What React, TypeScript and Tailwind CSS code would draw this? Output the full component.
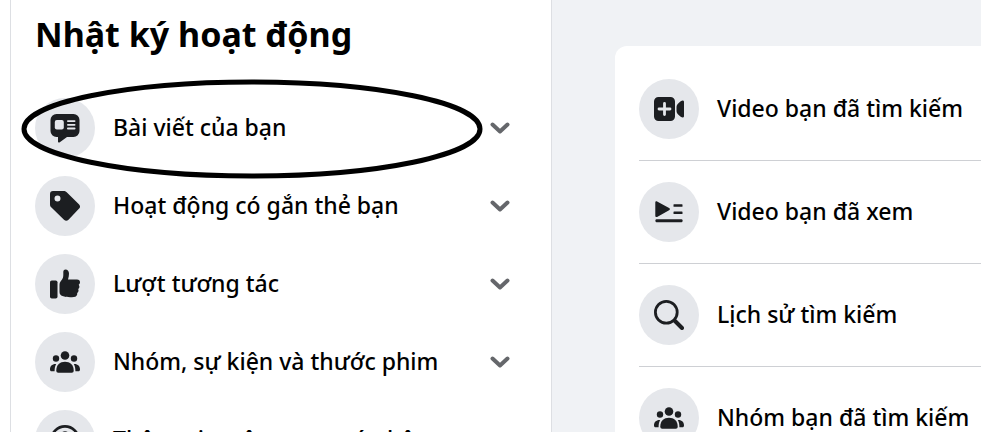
import { ReactNode } from "react";

const menu = [
  { label: "Bài viết của bạn", icon: <PostIcon /> },
  { label: "Hoạt động có gắn thẻ bạn", icon: <TagIcon /> },
  { label: "Lượt tương tác", icon: <LikeIcon /> },
  { label: "Nhóm, sự kiện và thước phim", icon: <GroupIcon /> },
  { label: "Thông tin trên trang cá nhân", icon: <ProfileIcon /> },
];

const history = [
  { label: "Video bạn đã tìm kiếm", icon: <VideoPlusIcon /> },
  { label: "Video bạn đã xem", icon: <WatchIcon /> },
  { label: "Lịch sử tìm kiếm", icon: <SearchIcon /> },
  { label: "Nhóm bạn đã tìm kiếm", icon: <GroupIcon /> },
];

function Svg({ children }: { children: ReactNode }) {
  return (
    <svg viewBox="0 0 30 30" fill="currentColor" className="size-[30px]" aria-hidden="true">
      {children}
    </svg>
  );
}

function PostIcon() {
  return (
    <Svg>
      <path d="M6.500 1h17a6 6 0 0 1 6 6v11a6 6 0 0 1-6 6H17L9.800 29.300c-.9.600-1.800.2-1.800-.9V24H6.500a6 6 0 0 1-6-6V7a6 6 0 0 1 6-6Z" />
      <g fill="#e5e7eb">
        <rect x="4.800" y="7" width="9" height="9.500" rx="2" />
        <rect x="17" y="7.200" width="8.500" height="1.800" rx=".9" />
        <rect x="17" y="10.900" width="8.500" height="1.800" rx=".9" />
        <rect x="17" y="14.600" width="8.500" height="1.800" rx=".9" />
      </g>
    </Svg>
  );
}

function TagIcon() {
  return (
    <Svg>
      <path
        fillRule="evenodd"
        d="M3 0h10.500c1.300 0 2.300.4 3.200 1.300l12.200 12c1.500 1.500 1.500 3 0 4.500L18.500 28.700c-1.500 1.500-3 1.500-4.500 0L1.200 16.200C.4 15.400 0 14.500 0 13.200V3c0-2 1-3 3-3Zm4.500 4.500a3 3 0 1 0 0 6 3 3 0 0 0 0-6Z"
      />
    </Svg>
  );
}

function LikeIcon() {
  return (
    <Svg>
      <rect x="0" y="11.500" width="7.500" height="18" rx="1.800" />
      <path d="M15.500.5c2.200 0 3.500 1.700 3.500 4.300 0 2-.4 3.700-1 5.700h9c2 0 3 1.200 3 2.700 0 1.200-.6 2-1.300 2.500 1.200 1.500.8 3.500-.5 4.300.8 1.500.2 3.200-1 3.900.4 2.200-1 3.900-3.400 4.100-4 .4-8.300.2-11.300-1-1.800-.7-3-1.700-3-4v-7.200c0-2.500 1.500-3.800 2.700-5.500C13.600 8.500 13.300 6 13.300 3c0-1.500.7-2.500 2.200-2.500Z" />
    </Svg>
  );
}

function GroupIcon() {
  return (
    <Svg>
      <circle cx="15" cy="8.500" r="4.300" />
      <circle cx="6" cy="11.500" r="3.200" />
      <circle cx="24" cy="11.500" r="3.200" />
      <path d="M6.300 23.500C6.300 18 10 14.800 15 14.800s8.700 3.200 8.700 8.700c0 1.500-.7 2.200-2 2.200H8.300c-1.300 0-2-.7-2-2.200Z" />
      <path d="M5.500 17C2 17 0 19.300 0 22.500 0 23.700.6 24.300 1.600 24.300h3c0-2.600.3-5 1.600-7.300Z" />
      <path d="M24.500 17c3.500 0 5.500 2.300 5.500 5.500 0 1.200-.6 1.800-1.600 1.800h-3c0-2.600-.3-5-1.600-7.300Z" />
    </Svg>
  );
}

function ProfileIcon() {
  return (
    <Svg>
      <path fillRule="evenodd" d="M15 0a15 15 0 1 0 0 30 15 15 0 0 0 0-30Zm0 2.800a12.200 12.200 0 1 1 0 24.400 12.200 12.200 0 0 1 0-24.400Z" />
      <circle cx="15" cy="11" r="4.800" />
      <path d="M7 24c0-4 3-6 8-6s8 2 8 6l-8 4Z" />
    </Svg>
  );
}

function VideoPlusIcon() {
  return (
    <Svg>
      <path
        fillRule="evenodd"
        d="M4.500 3h12A4.500 4.500 0 0 1 21 7.500v15a4.500 4.500 0 0 1-4.500 4.500h-12A4.500 4.500 0 0 1 0 22.500v-15A4.500 4.500 0 0 1 4.500 3Zm4.600 6.500v4.100H5a1.400 1.400 0 0 0 0 2.800h4.100v4.100a1.400 1.400 0 0 0 2.800 0v-4.100H16a1.400 1.400 0 0 0 0-2.800h-4.100V9.500a1.400 1.400 0 0 0-2.800 0Z"
      />
      <path d="M22.500 13.500c0-2 .7-3.300 2.200-4.500l2-1.700C28.500 6 30 6.300 30 8v14c0 1.700-1.500 2-3.300.7l-2-1.700c-1.500-1.200-2.200-2.500-2.200-4.500Z" />
    </Svg>
  );
}

function WatchIcon() {
  return (
    <Svg>
      <path d="M1.300 5.500c0-1.200.9-1.600 1.800-1.100l12 6.700c1.100.6 1.100 1.600 0 2.200l-12 6.600c-.9.500-1.800 0-1.800-1.100Z" />
      <rect x="19.500" y="7.200" width="9" height="2.600" rx=".6" />
      <rect x="19.500" y="14.500" width="9" height="2.600" rx=".6" />
      <rect x="1.500" y="22.200" width="27" height="3" rx="1" />
    </Svg>
  );
}

function SearchIcon() {
  return (
    <Svg>
      <circle cx="12.300" cy="12.300" r="10.900" fill="none" stroke="currentColor" strokeWidth="2.800" />
      <path d="m21 21 7 7" stroke="currentColor" strokeWidth="4" strokeLinecap="round" />
    </Svg>
  );
}

function Chevron() {
  return (
    <svg viewBox="0 0 20 12" className="h-3 w-5 shrink-0 text-[#65676b]" fill="none" aria-hidden="true">
      <path d="m2.500 2.500 7.500 7 7.500-7" stroke="currentColor" strokeWidth="4" strokeLinecap="round" strokeLinejoin="round" />
    </svg>
  );
}

function IconCircle({ children }: { children: ReactNode }) {
  return (
    <span className="flex size-[60px] shrink-0 items-center justify-center rounded-full bg-[#e5e7eb] text-[#1c1e21]">
      {children}
    </span>
  );
}

export default function App() {
  return (
    <div className="flex h-screen overflow-hidden bg-white pl-[10px] font-['Noto_Sans','Open_Sans',sans-serif] text-[23px] font-medium text-black">
      <aside className="w-[542px] shrink-0 border-x border-[#dddfe3] bg-white">
        <h1 className="px-6 pt-[10px] text-[34px] leading-[48px] font-bold">Nhật ký hoạt động</h1>
        <nav className="mt-[31px] px-6">
          <ul>
            {menu.map((item, i) => (
              <li key={item.label} className="relative h-[78px]">
                <button type="button" className="flex h-[78px] w-full items-center gap-[18px] pr-[17px] text-left">
                  <IconCircle>{item.icon}</IconCircle>
                  <span className="flex-1 pb-0.5 leading-8 whitespace-nowrap">{item.label}</span>
                  <Chevron />
                </button>
                {i === 0 && (
                  <svg
                    viewBox="0 0 462 100"
                    fill="none"
                    className="pointer-events-none absolute -top-[10px] -left-[14px] h-[100px] w-[462px] text-black"
                    aria-hidden="true"
                  >
                    <ellipse cx="231" cy="50" rx="228" ry="47" stroke="currentColor" strokeWidth="5" />
                  </svg>
                )}
              </li>
            ))}
          </ul>
        </nav>
      </aside>
      <main className="min-w-0 flex-1 bg-[#f0f2f5] pt-[46px] pl-[63px]">
        <ul className="h-full rounded-tl-xl bg-white pt-3 pl-6">
          {history.map((item) => (
            <li key={item.label} className="border-b border-[#ced0d4]">
              <a href="#" className="flex h-[102px] items-center gap-[18px]">
                <IconCircle>{item.icon}</IconCircle>
                <span className="pb-0.5 leading-8 whitespace-nowrap">{item.label}</span>
              </a>
            </li>
          ))}
        </ul>
      </main>
    </div>
  );
}
